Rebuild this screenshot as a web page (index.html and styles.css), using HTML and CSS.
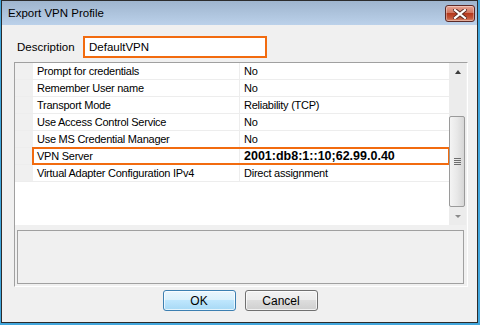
FILE: index.html
```html
<!DOCTYPE html>
<html lang="en">
<head>
    <meta charset="UTF-8">
    <title>Export VPN Profile</title>
    <link rel="stylesheet" href="styles.css">
</head>
<body>
    <div class="window">
        <div class="titlebar">
            <span class="title">Export VPN Profile</span>
            <button class="close" type="button">
                <svg width="14" height="10" viewBox="0 0 14 10">
                    <path d="M2 1 L12 9 M12 1 L2 9" stroke="#5a2a22" stroke-width="4" stroke-linecap="square"/>
                    <path d="M2 1 L12 9 M12 1 L2 9" stroke="#ffffff" stroke-width="2.2" stroke-linecap="square"/>
                </svg>
            </button>
        </div>
        <div class="client">
            <div class="desc-row">
                <label class="desc-label">Description</label>
                <div class="textbox">DefaultVPN</div>
            </div>

            <div class="propgrid">
                <div class="grid-main">
                    <div class="rows">
                        <div class="row"><span class="gutter"></span><div class="cells"><span class="name">Prompt for credentials</span><span class="value">No</span></div></div>
                        <div class="row"><span class="gutter"></span><div class="cells"><span class="name">Remember User name</span><span class="value">No</span></div></div>
                        <div class="row"><span class="gutter"></span><div class="cells"><span class="name">Transport Mode</span><span class="value">Reliability (TCP)</span></div></div>
                        <div class="row"><span class="gutter"></span><div class="cells"><span class="name">Use Access Control Service</span><span class="value">No</span></div></div>
                        <div class="row"><span class="gutter"></span><div class="cells"><span class="name">Use MS Credential Manager</span><span class="value">No</span></div></div>
                        <div class="row"><span class="gutter"></span><div class="cells marked"><span class="name">VPN Server</span><span class="value bold">2001:db8:1::10;62.99.0.40</span></div></div>
                        <div class="row"><span class="gutter"></span><div class="cells"><span class="name">Virtual Adapter Configuration IPv4</span><span class="value">Direct assignment</span></div></div>
                    </div>
                    <div class="scrollbar">
                        <div class="arrow"><span class="tri-up"></span></div>
                        <div class="track">
                            <div class="thumb"><span class="grip"></span></div>
                        </div>
                        <div class="arrow"><span class="tri-down"></span></div>
                    </div>
                </div>
                <div class="help"></div>
            </div>

            <div class="buttons">
                <button class="btn btn-default" type="button">OK</button>
                <button class="btn" type="button">Cancel</button>
            </div>
        </div>
    </div>
</body>
</html>
```

FILE: styles.css
```css
body {
    margin: 0;
    width: 480px;
    height: 325px;
    overflow: hidden;
    background-color: #41a6dc;
    font-family: 'Liberation Sans', Arial, sans-serif;
    font-size: 11px;
    color: #000;
}
.window {
    margin-left: 1px;
    width: 475px;
    height: 321px;
    border: 1px solid #2c2c2c;
    background-color: #f0f0f0;
    display: flex;
    flex-direction: column;
}
.titlebar {
    height: 24px;
    display: flex;
    align-items: flex-start;
    background: linear-gradient(#9fb5ce, #bbd1ea);
}
.title {
    font-size: 11.5px;
    padding-left: 6px;
    line-height: 24px;
    color: #000;
}
.close {
    margin: 4px 2px 0 auto;
    width: 30px;
    height: 17px;
    padding: 0;
    border: 1px solid #5b2a27;
    border-radius: 3px;
    background: linear-gradient(#e8a493, #cf7660 45%, #b5381c 50%, #c3563a 80%, #d98b6f);
    display: flex;
    align-items: center;
    justify-content: center;
    box-shadow: inset 0 0 0 1px rgba(255, 255, 255, 0.35);
}
.client {
    flex: 1;
    padding: 11px 0 0 12px;
}
.desc-row {
    display: flex;
    align-items: center;
    height: 22px;
}
.desc-label {
    width: 66px;
    padding-left: 3px;
    font-size: 11.5px;
}
.textbox {
    width: 176px;
    height: 18px;
    border: 2px solid #f26b0f;
    background-color: #fff;
    padding-left: 4px;
    line-height: 18px;
    font-size: 11.5px;
}
.propgrid {
    margin-top: 4px;
    width: 452px;
    height: 223px;
    border-top: 1px solid #a0a0a0;
    border-left: 1px solid #a0a0a0;
    border-right: 1px solid #fff;
    border-bottom: 1px solid #fff;
}
.grid-main {
    height: 162px;
    display: flex;
}
.rows {
    width: 434px;
    background-color: #fff;
}
.row {
    height: 16px;
    display: flex;
    border-bottom: 1px solid #ededed;
}
.gutter {
    width: 18px;
    background-color: #f0f0f0;
}
.cells {
    flex: 1;
    display: grid;
    grid-template-columns: 207px 1fr;
}
.cells.marked {
    outline: 2px solid #f26b0f;
    outline-offset: -1px;
}
.name {
    padding-left: 4px;
    line-height: 16px;
    border-right: 1px solid #ededed;
    white-space: nowrap;
    letter-spacing: -0.25px;
}
.value {
    padding-left: 4px;
    line-height: 16px;
    white-space: nowrap;
    letter-spacing: -0.25px;
}
.value.bold {
    font-weight: bold;
    font-size: 12.5px;
    letter-spacing: 0;
}
.scrollbar {
    width: 17px;
    display: flex;
    flex-direction: column;
    background-color: #ececec;
}
.arrow {
    height: 17px;
    display: flex;
    align-items: center;
    justify-content: center;
}
.tri-up {
    width: 0;
    height: 0;
    border-left: 3.5px solid transparent;
    border-right: 3.5px solid transparent;
    border-bottom: 4px solid #3c3c3c;
}
.tri-down {
    width: 0;
    height: 0;
    border-left: 3px solid transparent;
    border-right: 3px solid transparent;
    border-top: 3px solid #8a8a8a;
}
.track {
    flex: 1;
    padding-top: 36px;
    padding-right: 1px;
}
.thumb {
    height: 89px;
    border: 1px solid #9a9a9a;
    border-radius: 2px;
    background: linear-gradient(to right, #f4f4f4, #e8e8e8 50%, #d6d6d6);
    display: flex;
    align-items: center;
    justify-content: center;
}
.grip {
    width: 7px;
    height: 7px;
    background: repeating-linear-gradient(#6e6e6e 0 1px, transparent 1px 2px);
}
.help {
    margin: 5px 0 0 2px;
    width: 445px;
    height: 52px;
    border: 1px solid #a0a0a0;
    background-color: #f0f0f0;
}
.buttons {
    margin-top: 3px;
    width: 452px;
    display: flex;
    justify-content: center;
    gap: 9px;
}
.btn {
    width: 73px;
    height: 21px;
    padding: 0;
    border: 1px solid #707070;
    border-radius: 3px;
    font-family: 'Liberation Sans', Arial, sans-serif;
    font-size: 12px;
    color: #000;
    background: linear-gradient(#f2f2f2, #ebebeb 50%, #dddddd 50%, #cfcfcf);
    box-shadow: inset 0 0 0 1px rgba(255, 255, 255, 0.7);
}
.btn-default {
    border-color: #3c7fb1;
    background: linear-gradient(#eaf6fd, #d9f0fc 50%, #bee6fd 50%, #a7d9f5);
}
```
